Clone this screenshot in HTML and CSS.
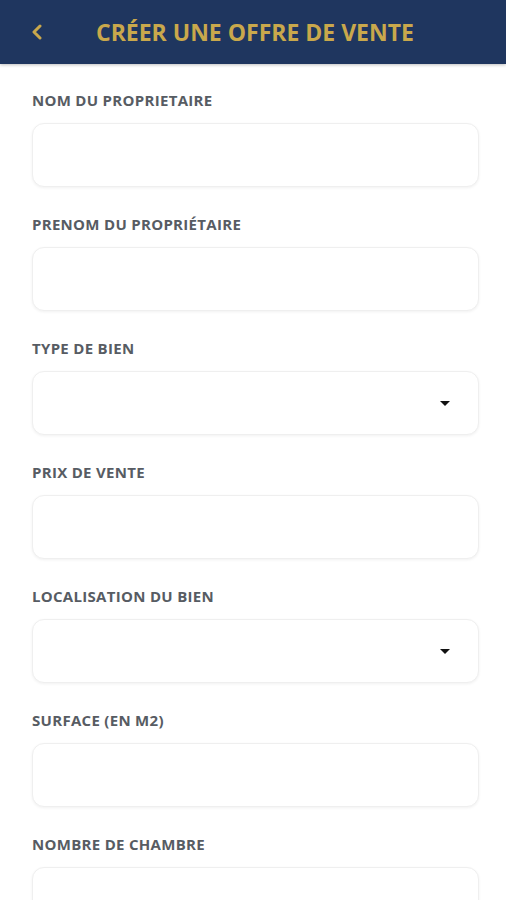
FILE: index.html
```html
<!DOCTYPE html>
<html lang="fr">
<head>
  <meta charset="UTF-8" />
  <title>Créer une offre de vente</title>
  <link rel="stylesheet" href="styles.css">
</head>
<body>
  <header class="topbar">
    <a class="back" href="#">
      <svg width="12" height="16" viewBox="0 0 12 16">
        <path d="M9 2 L3 8 L9 14" fill="none" stroke="#c9a84c" stroke-width="3" stroke-linecap="round" stroke-linejoin="round" />
      </svg>
    </a>
    <h1>CRÉER UNE OFFRE DE VENTE</h1>
  </header>

  <form class="offer-form">
    <div class="field">
      <label>NOM DU PROPRIETAIRE</label>
      <div class="box"></div>
    </div>
    <div class="field">
      <label>PRENOM DU PROPRIÉTAIRE</label>
      <div class="box"></div>
    </div>
    <div class="field">
      <label>TYPE DE BIEN</label>
      <div class="box select"><span class="caret"></span></div>
    </div>
    <div class="field">
      <label>PRIX DE VENTE</label>
      <div class="box"></div>
    </div>
    <div class="field">
      <label>LOCALISATION DU BIEN</label>
      <div class="box select"><span class="caret"></span></div>
    </div>
    <div class="field">
      <label>SURFACE (EN M2)</label>
      <div class="box"></div>
    </div>
    <div class="field">
      <label>NOMBRE DE CHAMBRE</label>
      <div class="box"></div>
    </div>
  </form>
</body>
</html>
```

FILE: styles.css
```css
* {
  box-sizing: border-box;
  margin: 0;
  padding: 0;
}
body {
  background: #fff;
  font-family: "Open Sans", "Noto Sans", sans-serif;
  overflow: hidden;
}

/* HEADER */
.topbar {
  height: 64px;
  background: #1f365f;
  display: flex;
  align-items: center;
  padding-left: 31px;
  box-shadow: 0 1px 3px rgba(0, 0, 0, 0.25);
}
.back {
  display: flex;
  width: 12px;
  margin-right: 53px;
}
.topbar h1 {
  color: #c9a84c;
  font-size: 23px;
  font-weight: 700;
}

/* FORM */
.offer-form {
  padding: 26px 27px 0 32px;
  display: flex;
  flex-direction: column;
  gap: 27px;
}
.field label {
  display: block;
  color: #575c63;
  font-size: 15px;
  font-weight: 700;
  letter-spacing: 0.3px;
  line-height: 20px;
  margin-bottom: 13px;
}
.box {
  height: 64px;
  border: 1px solid #efefef;
  border-radius: 12px;
  box-shadow: 0 1px 3px rgba(0, 0, 0, 0.06);
  background: #fff;
}
.select {
  display: flex;
  align-items: center;
  justify-content: flex-end;
  padding-right: 28px;
}
.caret {
  width: 0;
  height: 0;
  border-left: 5px solid transparent;
  border-right: 5px solid transparent;
  border-top: 5px solid #111;
}
```
